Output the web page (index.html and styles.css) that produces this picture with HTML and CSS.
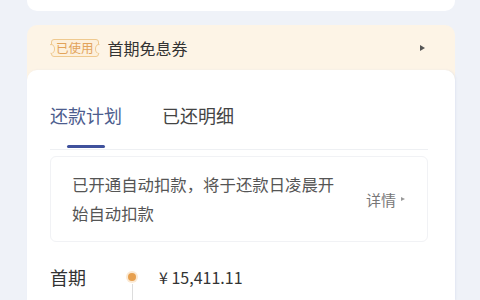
FILE: index.html
```html
<!DOCTYPE html>
<html lang="zh-CN">
<head>
<meta charset="utf-8">
<link rel="stylesheet" href="styles.css">
</head>
<body>
<div class="page">
  <div class="topcard"></div>
  <div class="group">
    <div class="coupon">
      <span class="badge">已使用</span>
      <span class="coupon-name">首期免息券</span>
      <span class="tri coupon-tri"></span>
    </div>
    <div class="main">
      <div class="tabs">
        <div class="tab active">还款计划<span class="bar"></span></div>
        <div class="tab">已还明细</div>
      </div>
      <div class="info">
        <p class="info-text">已开通自动扣款，将于还款日凌晨开始自动扣款</p>
        <span class="detail">详情<span class="tri detail-tri"></span></span>
      </div>
      <div class="plan">
        <div class="period">
          <div class="p-name">首期</div>
          <div class="p-date">2023.08.15</div>
        </div>
        <div class="axis"><span class="dot"></span><span class="line"></span></div>
        <div class="p-body">
          <div class="amount">¥ 15,411.11</div>
          <div class="sub"><span class="orange">本金 ¥15,000.00</span> <span>利息 ¥411.11</span> <span class="gold">优惠 ¥</span></div>
        </div>
      </div>
    </div>
  </div>
</div>
</body>
</html>
```
FILE: styles.css
```css
html, body {
  margin: 0;
  padding: 0;
}
body {
  width: 480px;
  height: 300px;
  overflow: hidden;
  background: #eff2f8;
  font-family: "Noto Sans CJK SC", "Noto Sans", sans-serif;
  color: #333;
}
.page {
  padding: 0 25px 0 27px;
}
.topcard {
  height: 11px;
  background: #fff;
  border-radius: 0 0 10px 10px;
}
.group {
  margin-top: 14px;
  background: #fdf4e6;
  border-radius: 10px 10px 0 0;
}
.coupon {
  height: 45px;
  display: flex;
  align-items: center;
  padding: 0 30px 0 24px;
}
.badge {
  position: relative;
  font-size: 12.5px;
  line-height: 16px;
  color: #e2a35a;
  background: #fdf0dc;
  border: 1px solid #efc98f;
  border-radius: 3px;
  padding: 0 4px;
}
.badge::before, .badge::after {
  content: "";
  position: absolute;
  top: 4px;
  width: 6px;
  height: 8px;
  border: 1px solid #efc98f;
  border-radius: 50%;
  background: #fdf4e6;
}
.badge::before { left: -5px; clip-path: inset(0 0 0 3px); }
.badge::after { right: -5px; clip-path: inset(0 3px 0 0); }
.coupon-name {
  margin-left: 9px;
  font-size: 16px;
  color: #333;
}
.tri {
  display: inline-block;
  width: 0;
  height: 0;
  border-top: 3px solid transparent;
  border-bottom: 3px solid transparent;
  border-left: 5px solid #555;
}
.coupon-tri {
  margin-left: auto;
}
.main {
  background: #fff;
  border-radius: 10px 10px 0 0;
  padding: 0 27px 0 23px;
  height: 230px;
  box-shadow: 1px 0 2px rgba(200, 210, 230, 0.35);
}
.tabs {
  display: flex;
  gap: 40px;
  height: 80px;
  border-bottom: 1px solid #eef0f3;
  box-sizing: border-box;
  padding-top: 31px;
}
.tab {
  position: relative;
  font-size: 18px;
  line-height: 28px;
  color: #444;
}
.tab.active {
  color: #4d5d8e;
}
.bar {
  position: absolute;
  left: 17px;
  width: 38px;
  top: 44px;
  height: 3px;
  border-radius: 2px;
  background: #3f519c;
}
.info {
  margin-top: 6px;
  height: 86px;
  box-sizing: border-box;
  border: 1px solid #f1f2f5;
  border-radius: 6px;
  display: flex;
  align-items: center;
  padding: 0 22px 0 21px;
}
.info-text {
  margin: 0;
  width: 270px;
  font-size: 16.4px;
  line-height: 29px;
  color: #555;
}
.detail {
  margin-left: auto;
  font-size: 15px;
  color: #777;
  display: flex;
  align-items: center;
  gap: 5px;
}
.detail-tri {
  border-left-color: #999;
  border-top-width: 2px;
  border-bottom-width: 2px;
  border-left-width: 4px;
}
.plan {
  margin-top: 22px;
  display: flex;
}
.period {
  width: 72px;
}
.p-name {
  font-size: 18px;
  line-height: 26px;
  color: #333;
}
.p-date {
  font-size: 13px;
  line-height: 20px;
  color: #aaa;
  margin-top: 6px;
}
.axis {
  width: 20px;
  display: flex;
  flex-direction: column;
  align-items: center;
  padding-top: 9px;
}
.dot {
  width: 8px;
  height: 8px;
  border-radius: 50%;
  background: #e7a04f;
  box-shadow: 0 0 0 2px #fbe9d3;
}
.line {
  width: 1px;
  flex: 1;
  background: #ddd;
  margin-top: 3px;
}
.p-body {
  margin-left: 17px;
}
.amount {
  font-size: 16px;
  line-height: 26px;
  color: #333;
}
.sub {
  font-size: 13px;
  line-height: 20px;
  color: #999;
  margin-top: 6px;
}
.orange { color: #f0b98a; }
.gold { color: #e8b24a; margin-left: 6px; }
```
